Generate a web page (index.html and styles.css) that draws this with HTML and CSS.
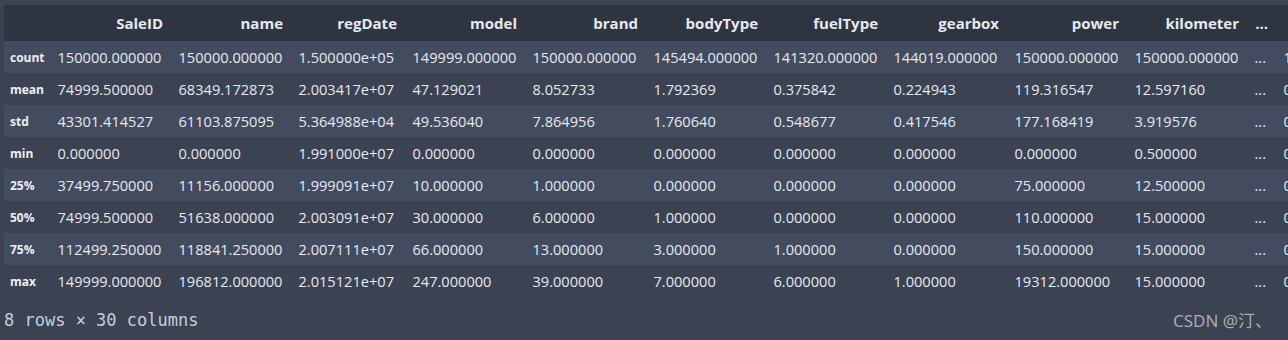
FILE: index.html
```html
<!DOCTYPE html>
<html>
<head>
<meta charset="utf-8">
<link rel="stylesheet" href="styles.css">
</head>
<body>
<div class="output">
  <div class="frame">
    <table class="df">
      <colgroup>
        <col class="c-idx">
        <col class="c121"><col class="c120"><col class="c114"><col class="c120"><col class="c121">
        <col class="c120"><col class="c120"><col class="c121"><col class="c120"><col class="c120">
        <col class="c-dots"><col class="c120">
      </colgroup>
      <thead>
        <tr>
          <th></th><th>SaleID</th><th>name</th><th>regDate</th><th>model</th><th>brand</th><th>bodyType</th><th>fuelType</th><th>gearbox</th><th>power</th><th>kilometer</th><th>...</th><th>v_14</th>
        </tr>
      </thead>
      <tbody>
        <tr><th>count</th><td>150000.000000</td><td>150000.000000</td><td>1.500000e+05</td><td>149999.000000</td><td>150000.000000</td><td>145494.000000</td><td>141320.000000</td><td>144019.000000</td><td>150000.000000</td><td>150000.000000</td><td>...</td><td>150000.000000</td></tr>
        <tr><th>mean</th><td>74999.500000</td><td>68349.172873</td><td>2.003417e+07</td><td>47.129021</td><td>8.052733</td><td>1.792369</td><td>0.375842</td><td>0.224943</td><td>119.316547</td><td>12.597160</td><td>...</td><td>0.000813</td></tr>
        <tr><th>std</th><td>43301.414527</td><td>61103.875095</td><td>5.364988e+04</td><td>49.536040</td><td>7.864956</td><td>1.760640</td><td>0.548677</td><td>0.417546</td><td>177.168419</td><td>3.919576</td><td>...</td><td>0.000000</td></tr>
        <tr><th>min</th><td>0.000000</td><td>0.000000</td><td>1.991000e+07</td><td>0.000000</td><td>0.000000</td><td>0.000000</td><td>0.000000</td><td>0.000000</td><td>0.000000</td><td>0.500000</td><td>...</td><td>0.000000</td></tr>
        <tr><th>25%</th><td>37499.750000</td><td>11156.000000</td><td>1.999091e+07</td><td>10.000000</td><td>1.000000</td><td>0.000000</td><td>0.000000</td><td>0.000000</td><td>75.000000</td><td>12.500000</td><td>...</td><td>0.000000</td></tr>
        <tr><th>50%</th><td>74999.500000</td><td>51638.000000</td><td>2.003091e+07</td><td>30.000000</td><td>6.000000</td><td>1.000000</td><td>0.000000</td><td>0.000000</td><td>110.000000</td><td>15.000000</td><td>...</td><td>0.000000</td></tr>
        <tr><th>75%</th><td>112499.250000</td><td>118841.250000</td><td>2.007111e+07</td><td>66.000000</td><td>13.000000</td><td>3.000000</td><td>1.000000</td><td>0.000000</td><td>150.000000</td><td>15.000000</td><td>...</td><td>0.000000</td></tr>
        <tr><th>max</th><td>149999.000000</td><td>196812.000000</td><td>2.015121e+07</td><td>247.000000</td><td>39.000000</td><td>7.000000</td><td>6.000000</td><td>1.000000</td><td>19312.000000</td><td>15.000000</td><td>...</td><td>0.000000</td></tr>
      </tbody>
    </table>
  </div>
  <p class="shape">8 rows × 30 columns</p>
</div>
<div class="watermark">CSDN @汀、</div>
</body>
</html>
```

FILE: styles.css
```css
html, body {
  margin: 0;
  padding: 0;
  background: #3b4252;
  width: 1288px;
  height: 340px;
  overflow: hidden;
}

.output {
  padding: 5px 0 0 4px;
}

.frame {
  overflow: hidden;
  width: 1284px;
}

.df {
  border-collapse: collapse;
  border-spacing: 0;
  table-layout: fixed;
  width: 1392px;
  font-family: "Open Sans", "Noto Sans", sans-serif;
  font-size: 14.6px;
  color: #e5e9f0;
}

.c-idx { width: 46px; }
.c121 { width: 121px; }
.c120 { width: 120px; }
.c114 { width: 114px; }
.c-dots { width: 29px; }

.df thead tr {
  background: #2e3440;
  height: 36px;
}

.df thead th {
  font-weight: 700;
  font-size: 15px;
  text-align: right;
  padding: 0 8px 0 7px;
  white-space: nowrap;
  color: #e5e9f0;
}

.df tbody tr {
  height: 32px;
  background: #3b4252;
}

.df tbody tr:nth-child(odd) {
  background: #434c5e;
}

.df tbody th {
  font-weight: 700;
  font-size: 12px;
  text-align: left;
  padding: 0 0 0 6px;
  color: #eceff4;
}

.df td {
  text-align: left;
  padding: 0 8px 0 7.5px;
  white-space: nowrap;
  overflow: hidden;
}

.shape {
  margin: 0;
  padding-top: 13px;
  font-family: "DejaVu Sans Mono", monospace;
  font-size: 17px;
  line-height: 20px;
  color: #c6cede;
}

.watermark {
  position: absolute;
  left: 1173px;
  top: 309px;
  font-family: "Noto Sans", "Noto Sans CJK SC", sans-serif;
  font-size: 17px;
  line-height: 24px;
  color: rgba(200, 200, 200, 0.8);
}
```
